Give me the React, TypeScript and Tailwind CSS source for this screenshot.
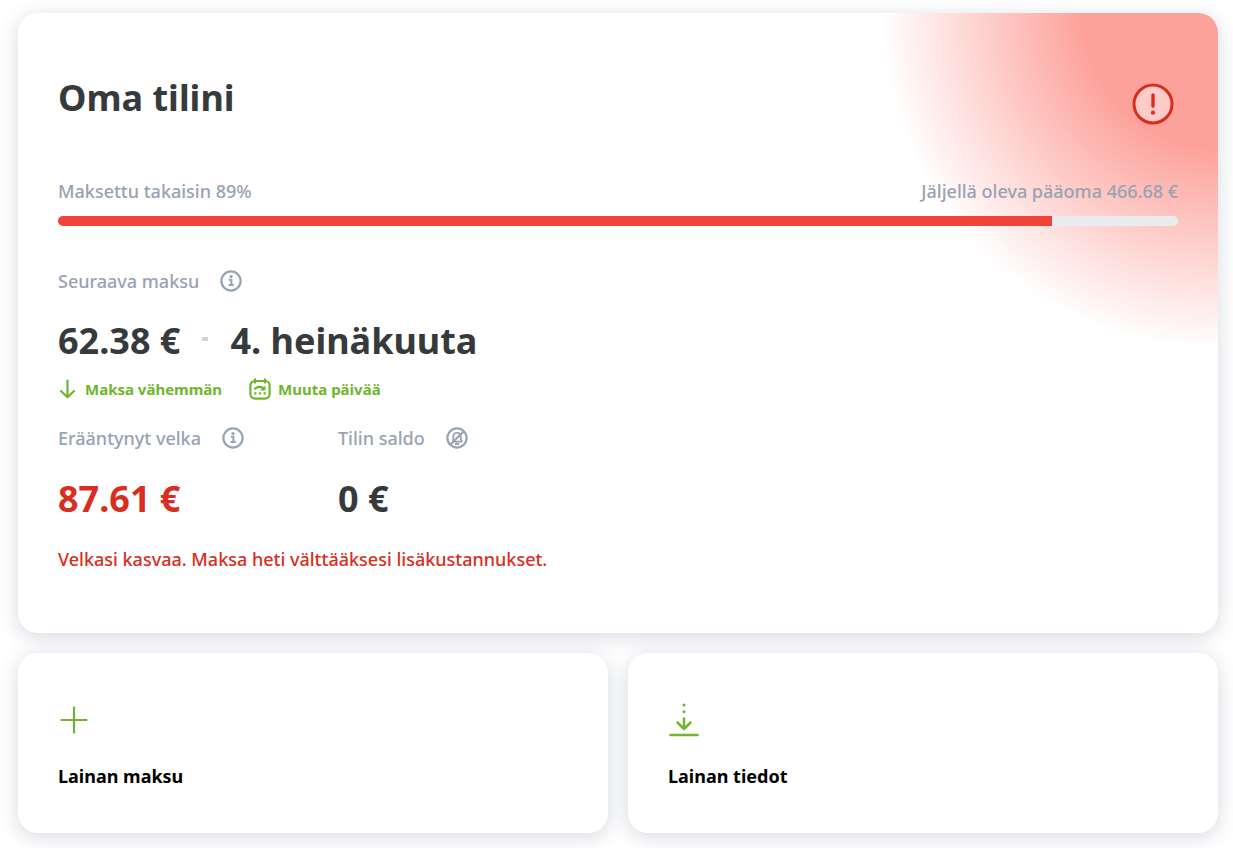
import type { ReactNode } from 'react';

const PAID_PERCENT = 89;
const PAID_SHARE = 0.8876;

const AlertIcon = () => (
    <svg width="50" height="50" viewBox="0 0 50 50" fill="none" role="img" aria-label="Huomio">
        <circle cx="25" cy="25" r="19" fill="#ffcbc8" stroke="#d92d20" strokeWidth="3" />
        <path d="M25 16V27" stroke="#d92d20" strokeWidth="3.4" strokeLinecap="round" />
        <circle cx="25" cy="33.7" r="2.1" fill="#d92d20" />
    </svg>
);

const InfoIcon = () => (
    <svg width="24" height="24" viewBox="0 0 24 24" fill="none" stroke="#98a2b3">
        <circle cx="12" cy="12" r="9.6" strokeWidth="2.2" />
        <path d="M9.8 10.7H12.4V15.6M9.6 15.9H14.8" strokeWidth="2" />
        <circle cx="12" cy="7.5" r="1.6" fill="#98a2b3" stroke="none" />
    </svg>
);

const BellOffIcon = () => (
    <svg width="24" height="24" viewBox="0 0 24 24" fill="none" stroke="#98a2b3">
        <circle cx="12" cy="12" r="9.6" strokeWidth="2.2" />
        <path d="M7 15.6H17.2M8.3 15V11C8.3 8.4 9.8 6.8 12 6.8S15.8 8.4 15.8 11V13.2L17.2 15.6" strokeWidth="1.8" />
        <path d="M10 18H14" strokeWidth="2" />
        <path d="M5.5 18.5L18.5 5.5" strokeWidth="2.2" />
    </svg>
);

const ArrowDownIcon = () => (
    <svg width="20" height="22" viewBox="0 0 20 22" fill="none" stroke="#70b62c" strokeWidth="2.2" strokeLinecap="round" strokeLinejoin="round">
        <path d="M9.5 2.5V19M3 13L9.5 19.2L16 13" />
    </svg>
);

const CalendarIcon = () => (
    <svg width="22" height="22" viewBox="0 0 22 22" fill="none" stroke="#70b62c" strokeWidth="2.2">
        <rect x="1.4" y="3" width="19.2" height="17.6" rx="4.5" />
        <path d="M6 1.4V4.6M16 1.4V4.6" strokeLinecap="round" />
        <path d="M5.6 11.6C7.2 8.6 11.6 7.6 14.8 10.6" />
        <path d="M16.4 7.4V12.6H11.2Z" fill="#70b62c" stroke="none" />
        <path d="M5.2 15.4H7.4M9.9 15.4H12.1M14.6 15.4H16.8" />
    </svg>
);

const PlusIcon = () => (
    <svg width="32" height="40" viewBox="0 0 32 40" fill="none" stroke="#70b62c" strokeWidth="2.2" strokeLinecap="round">
        <path d="M16 7.5V32.5M3.5 20H28.5" />
    </svg>
);

const DownloadIcon = () => (
    <svg width="32" height="40" viewBox="0 0 32 40" fill="none" stroke="#70b62c" strokeWidth="2.5" strokeLinecap="round" strokeLinejoin="round">
        <path d="M16 18.5V29M9.5 22.5L16 29L22.5 22.5" />
        <path d="M2.5 35H29.5" />
        <path d="M16 5V5.1M16 11.7V11.8" strokeWidth="3" />
    </svg>
);

const Label = ({ children, icon, hint }: { children: ReactNode; icon: ReactNode; hint: string }) => (
    <div className="flex h-8 items-center gap-5 text-[18px] font-medium text-[#98a2b3]">
        <span>{children}</span>
        <button type="button" aria-label={hint} className="cursor-pointer">{icon}</button>
    </div>
);

const ActionLink = ({ children, icon }: { children: ReactNode; icon: ReactNode }) => (
    <button type="button" className="flex cursor-pointer items-center gap-[7px] text-[15px] font-bold text-[#70b62c]">
        {icon}
        {children}
    </button>
);

const Tile = ({ title, icon }: { title: string; icon: ReactNode }) => (
    <a href="#" className="flex flex-col gap-6 rounded-[20px] bg-white px-10 pt-[47px] pb-11 shadow-[0_4px_20px_rgba(52,64,100,0.2)]">
        {icon}
        <span className="text-[18px] leading-[25px] font-bold text-black">{title}</span>
    </a>
);

const App = () => {
    return (
        <main className="flex flex-col gap-5 pt-[13px] pr-[15px] pb-[15px] pl-[18px] font-['Noto_Sans',sans-serif] text-[#363a3d]">
            <section className="rounded-[20px] bg-white bg-[radial-gradient(circle_at_top_right,#fda29b_135px,#ffffff_337px)] px-10 pt-15 pb-[62px] shadow-[0_4px_20px_rgba(52,64,100,0.2)]">
                <header className="flex items-start justify-between">
                    <h1 className="text-[36px] leading-[50px] font-bold">Oma tilini</h1>
                    <div className="pt-[6px]">
                        <AlertIcon />
                    </div>
                </header>

                <div className="mt-[50px] flex justify-between text-[18px] leading-6 font-medium text-[#98a2b3]">
                    <span id="paid">Maksettu takaisin {PAID_PERCENT}%</span>
                    <span>Jäljellä oleva pääoma 466.68 €</span>
                </div>
                <div
                    role="progressbar"
                    aria-labelledby="paid"
                    aria-valuenow={PAID_PERCENT}
                    className="mt-[13px] h-[10px] overflow-hidden rounded-full bg-[#eaecf0]"
                >
                    <div className="h-full bg-[#f04438]" style={{ width: `${PAID_SHARE * 100}%` }} />
                </div>

                <div className="mt-[39px]">
                    <Label icon={<InfoIcon />} hint="Lisätietoja maksusta">Seuraava maksu</Label>
                    <div className="mt-5 flex items-center text-[36px] leading-12 font-bold">
                        <span>62.38 €</span>
                        <span className="mx-[22px] mb-1 h-1 w-[6px] bg-[#d0d5dd]" />
                        <span>4. heinäkuuta</span>
                    </div>
                    <div className="mt-3 flex h-6 gap-[27px]">
                        <ActionLink icon={<ArrowDownIcon />}>Maksa vähemmän</ActionLink>
                        <ActionLink icon={<CalendarIcon />}>Muuta päivää</ActionLink>
                    </div>
                </div>

                <div className="mt-[21px] flex">
                    <div className="w-[280px]">
                        <Label icon={<InfoIcon />} hint="Lisätietoja velasta">Erääntynyt velka</Label>
                        <p className="mt-[21px] text-[36px] leading-12 font-bold text-[#d92d20]">87.61 €</p>
                    </div>
                    <div>
                        <Label icon={<BellOffIcon />} hint="Ilmoitukset">Tilin saldo</Label>
                        <p className="mt-[21px] text-[36px] leading-12 font-bold">0 €</p>
                    </div>
                </div>

                <p className="mt-6 text-[18px] leading-6 font-medium text-[#d92d20]">
                    Velkasi kasvaa. Maksa heti välttääksesi lisäkustannukset.
                </p>
            </section>

            <nav className="grid grid-cols-2 gap-5">
                <Tile title="Lainan maksu" icon={<PlusIcon />} />
                <Tile title="Lainan tiedot" icon={<DownloadIcon />} />
            </nav>
        </main>
    );
}


export default App;
